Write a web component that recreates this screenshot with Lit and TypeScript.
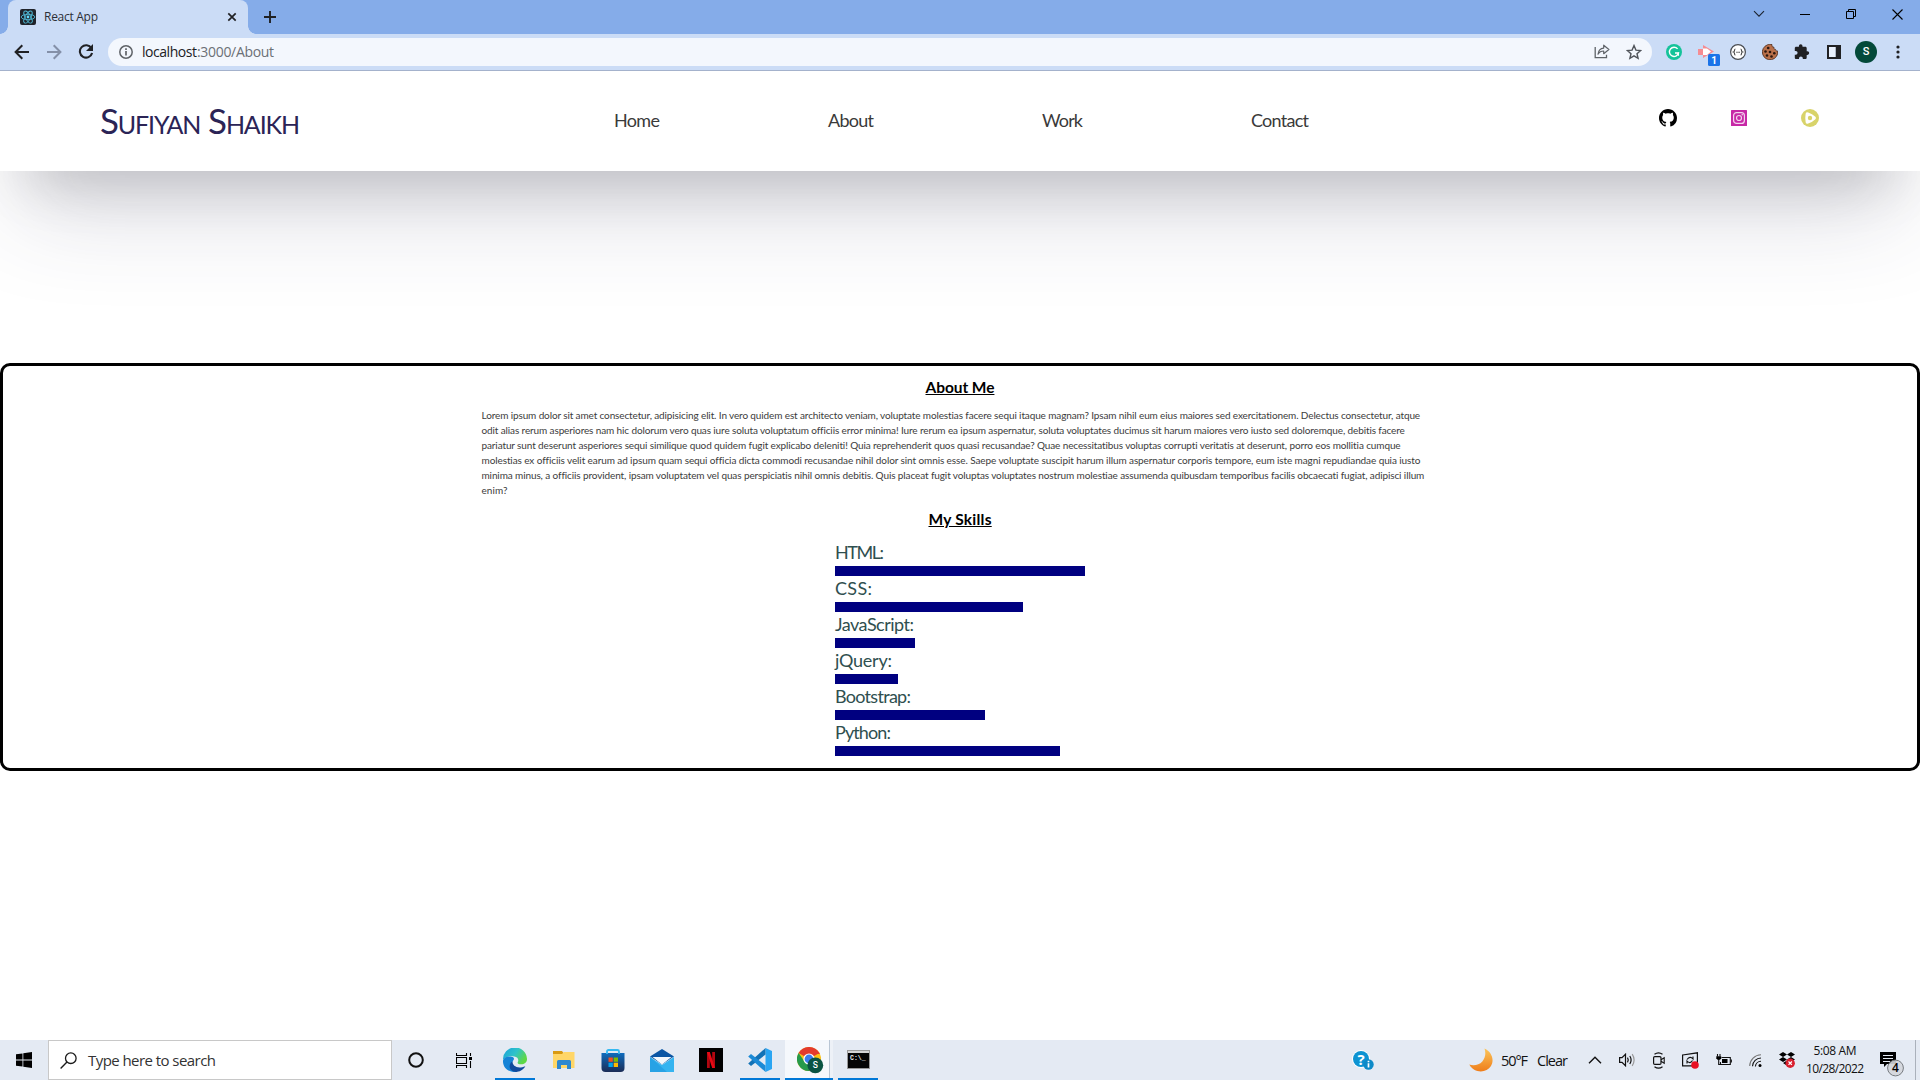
import { LitElement, html, css, svg } from "lit";
import { customElement, property } from "lit/decorators.js";

/** One line of text, tracked so that it occupies exactly `w` pixels. */
@customElement("fit-text")
class FitText extends LitElement {
  static styles = css`
    :host { display: inline-block; white-space: pre; text-decoration: inherit; }
    .t { display: inline-block; text-decoration: inherit; }
  `;
  @property() text = "";
  @property({ type: Number }) w = 0;
  render() { return html`<span class="t">${this.text}</span>`; }
  updated() {
    const el = this.renderRoot.querySelector<HTMLElement>(".t")!;
    el.style.letterSpacing = "normal";
    const n = [...this.text].length;
    const d = (this.w - el.getBoundingClientRect().width) / Math.max(1, n - 1);
    el.style.letterSpacing = `${d}px`;
    el.style.marginRight = `${-d}px`;
  }
}

const fit = (text: string, w: number) => html`<fit-text .text=${text} .w=${w}></fit-text>`;

const NAV: [string, number][] = [["Home", 46], ["About", 46], ["Work", 41], ["Contact", 58]];

const LINES: [string, number][] = [
  ["Lorem ipsum dolor sit amet consectetur, adipisicing elit. In vero quidem est architecto veniam, voluptate molestias facere sequi itaque magnam? Ipsam nihil eum eius maiores sed exercitationem. Delectus consectetur, atque", 939],
  ["odit alias rerum asperiores nam hic dolorum vero quas iure soluta voluptatum officiis error minima! Iure rerum ea ipsum aspernatur, soluta voluptates ducimus sit harum maiores vero iusto sed doloremque, debitis facere", 923],
  ["pariatur sunt deserunt asperiores sequi similique quod quidem fugit explicabo deleniti! Quia reprehenderit quos quasi recusandae? Quae necessitatibus voluptas corrupti veritatis at deserunt, porro eos mollitia cumque", 920],
  ["molestias ex officiis velit earum ad ipsum quam sequi officia dicta commodi recusandae nihil dolor sint omnis esse. Saepe voluptate suscipit harum illum aspernatur corporis tempore, eum iste magni repudiandae quia iusto", 938],
  ["minima minus, a officiis provident, ipsam voluptatem vel quas perspiciatis nihil omnis debitis. Quis placeat fugit voluptas voluptates nostrum molestiae assumenda quibusdam temporibus facilis obcaecati fugiat, adipisci illum", 943],
  ["enim?", 26],
];

const SKILLS: [string, number, number][] = [
  ["HTML:", 49, 250], ["CSS:", 37, 188], ["JavaScript:", 79, 80],
  ["jQuery:", 57, 63], ["Bootstrap:", 76, 150], ["Python:", 56, 225],
];

const ic = (w: number, h: number, body: unknown) =>
  html`<svg class="ic" width=${w} height=${h} viewBox="0 0 ${w} ${h}">${body}</svg>`;

const icon = {
  react: ic(16, 16, svg`<rect width="16" height="16" rx="2" fill="#20232a"/><g fill="none" stroke="#4fb8d4" stroke-width=".9"><ellipse cx="8" cy="8" rx="6.8" ry="2.7"/><ellipse cx="8" cy="8" rx="6.8" ry="2.7" transform="rotate(60 8 8)"/><ellipse cx="8" cy="8" rx="6.8" ry="2.7" transform="rotate(120 8 8)"/></g><circle cx="8" cy="8" r="1.4" fill="#61dafb"/>`),
  tabClose: ic(10, 10, svg`<path d="M1.3 1.3l7.4 7.4M8.7 1.3L1.3 8.7" stroke="#202124" stroke-width="1.7"/>`),
  plus: ic(12, 12, svg`<path d="M6 0v12M0 6h12" stroke="#202124" stroke-width="1.9"/>`),
  back: ic(16, 16, svg`<path d="M15 8H2M8.3 1.3L1.6 8l6.7 6.7" fill="none" stroke="#202124" stroke-width="2"/>`),
  fwd: ic(16, 16, svg`<path d="M1 8h13M7.7 1.3L14.4 8l-6.7 6.7" fill="none" stroke="#8490a8" stroke-width="2"/>`),
  reload: ic(16, 16, svg`<path d="M13.4 4.2A6.2 6.2 0 1 0 14.1 9" fill="none" stroke="#202124" stroke-width="2.1"/><path d="M15 0v7H8z" fill="#202124"/>`),
  info: ic(14, 14, svg`<circle cx="7" cy="7" r="6.2" fill="none" stroke="#5f6368" stroke-width="1.5"/><path d="M7 6v4.6M7 3.2v1.7" stroke="#5f6368" stroke-width="1.7"/>`),
  share: ic(16, 15, svg`<path d="M1.2 3v10.6h11.3v-2.8" fill="none" stroke="#5f6368" stroke-width="1.3"/><path d="M4 10.2C4.4 6.500 6.500 4.400 9.700 4.100V1.200L14.900 5.500 9.700 9.700V7C7 7 5.300 8 4 10.200z" fill="none" stroke="#5f6368" stroke-width="1.2" stroke-linejoin="round"/>`),
  star: ic(16, 16, svg`<path d="M8 1.600l1.900 4.500 4.800.4-3.700 3.200 1.100 4.700L8 11.900l-4.100 2.500L5 9.700 1.300 6.500l4.800-.4z" fill="none" stroke="#50545a" stroke-width="1.400"/>`),
  grammarly: ic(16, 16, svg`<circle cx="8" cy="8" r="8" fill="#15c39a"/><path d="M11.600 4.900A4.600 4.600 0 1 0 12.500 9H9" fill="none" stroke="#fff" stroke-width="1.400"/><path d="M12.400 8.500v3.200" stroke="#fff" stroke-width="1.200"/>`),
  clip: ic(22, 21, svg`<path d="M0 4h5V0l11 6.500-11 6.500v-3H0z" fill="#f58c92"/><path d="M5 3.500h4l4 3-4 3.500H5z" fill="#fff"/><rect x="10" y="9" width="12" height="12" rx="1.500" fill="#1a73e8"/><text x="16" y="18.600" text-anchor="middle" font-family="Roboto" font-weight="700" font-size="10" fill="#fff">1</text>`),
  braces: ic(16, 16, svg`<circle cx="8" cy="8" r="7.400" fill="#fff" stroke="#4a4d52" stroke-width="1.200"/><path d="M5.400 5C4 5 5 7.600 3.600 8 5 8.400 4 11 5.400 11M10.600 5c1.400 0 .4 2.600 1.800 3-1.400.4-.4 3-1.800 3" fill="none" stroke="#444" stroke-width="1.100"/><path d="M6.300 8.300h3.600" stroke="#444" stroke-width="1.100" stroke-dasharray="1 .3"/>`),
  cookie: ic(16, 16, svg`<path d="M5.500.8A7.700 7.700 0 1 0 15.700 7c-1.500.2-2-.5-2.100-1.600-1.500 0-2.100-.9-1.600-2.300C10.500 3.500 9.700 2.400 10 .6 8.500.2 7 .2 5.500.8z" fill="#b9704a" stroke="#4d2b1a" stroke-width=".8"/><g fill="#2b1710"><circle cx="6.200" cy="4" r="1.300"/><circle cx="3.500" cy="7.500" r="1.300"/><circle cx="8" cy="8" r="1.300"/><circle cx="5" cy="11.500" r="1.300"/><circle cx="9.500" cy="12.500" r="1.300"/><circle cx="12.300" cy="9.200" r="1.300"/></g>`),
  puzzle: ic(16, 16, svg`<path d="M13.400 7.300h-.7V4.200c0-.8-.6-1.400-1.400-1.400H8.500V2a1.800 1.800 0 0 0-3.600 0v.8H2.200C1.400 2.800.8 3.400.8 4.200v2.700h.9a1.900 1.900 0 0 1 0 3.800H.8v3c0 .8.6 1.400 1.400 1.400h2.800v-.8a1.900 1.900 0 0 1 3.800 0v.8h2.500c.8 0 1.400-.6 1.400-1.400v-2.800h.7a1.800 1.800 0 0 0 0-3.600z" fill="#202124"/>`),
  panel: ic(14, 14, svg`<path d="M0 0h14v14H0zM2 2v10h6.500V2z" fill="#202124" fill-rule="evenodd"/><rect x="2" y="2" width="6.500" height="10" fill="#e8f0fc"/>`),
  dots: ic(4, 14, svg`<circle cx="2" cy="2" r="1.600" fill="#202124"/><circle cx="2" cy="7" r="1.600" fill="#202124"/><circle cx="2" cy="12" r="1.600" fill="#202124"/>`),
  chev: ic(12, 8, svg`<path d="M1 1.200l5 5 5-5" fill="none" stroke="#1c2430" stroke-width="1.100"/>`),
  min: ic(10, 10, svg`<path d="M0 5.500h10" stroke="#000"/>`),
  max: ic(10, 10, svg`<path d="M.5 2.500h7v7h-7zM2.500 2.500v-2h7v7h-2" fill="none" stroke="#000"/>`),
  close: ic(11, 11, svg`<path d="M.5.5l10 10M10.500.5l-10 10" stroke="#000" stroke-width="1.100"/>`),
  github: html`<svg class="ic" width="18" height="18" viewBox="0 0 16 16"><path d="M8 0C3.580 0 0 3.580 0 8c0 3.540 2.290 6.530 5.470 7.590.4.070.55-.17.55-.38 0-.19-.01-.82-.01-1.490-2.010.37-2.530-.49-2.690-.94-.09-.23-.48-.94-.82-1.130-.28-.15-.68-.52-.01-.53.63-.01 1.080.58 1.230.82.72 1.210 1.870.87 2.330.66.070-.52.28-.87.51-1.070-1.780-.2-3.640-.89-3.640-3.950 0-.87.31-1.590.82-2.150-.08-.2-.36-1.020.08-2.120 0 0 .67-.21 2.200.82.64-.18 1.320-.27 2-.27s1.360.09 2 .27c1.530-1.040 2.200-.82 2.200-.82.44 1.100.16 1.920.08 2.120.51.56.82 1.270.82 2.150 0 3.070-1.870 3.750-3.650 3.950.29.25.54.73.54 1.480 0 1.070-.01 1.930-.01 2.200 0 .21.15.46.55.38A8.010 8.010 0 0 0 16 8c0-4.420-3.580-8-8-8z"/></svg>`,
  insta: ic(16, 16, svg`<rect width="16" height="16" rx=".5" fill="#c729a6"/><g fill="none" stroke="#f4d4ee" stroke-width="1.200"><rect x="2.600" y="2.600" width="10.800" height="10.800" rx="3"/><circle cx="8" cy="8" r="2.500"/></g><circle cx="11.200" cy="4.800" r=".8" fill="#f4d4ee"/>`),
  play: ic(18, 18, svg`<circle cx="9" cy="9" r="9" fill="#d8d36a"/><path d="M4.600 5.200q0-2.600 2.600-1.700 4 1.200 7.200 4.300 1.200 1.200 0 2.400-3.200 3.100-7.200 4.300-2.600.9-2.600-1.700-.6-3.800 0-7.600z" fill="#fff"/><circle cx="9" cy="9" r="2.200" fill="#d8d36a"/>`),
  win: ic(16, 16, svg`<path d="M0 2.300L6.500 1.400v6.200H0zM7.300 1.300L16 0v7.600H7.300zM0 8.400h6.500v6.200L0 13.700zM7.300 8.400H16V16l-8.700-1.300z" fill="#000"/>`),
  search: ic(17, 17, svg`<circle cx="10.800" cy="6.200" r="5.300" fill="none" stroke="#1a1a1a" stroke-width="1.300"/><path d="M7 10L.6 16.400" stroke="#1a1a1a" stroke-width="1.400"/>`),
  cortana: ic(16, 16, svg`<circle cx="8" cy="8" r="6.800" fill="none" stroke="#111" stroke-width="2"/>`),
  task: ic(16, 15, svg`<path d="M.5 0v2.500h10V0M.5 15v-2.500h10V15M.5 4.500h10v6H.5zM14.500 0v3M14.500 8v7" fill="none" stroke="#000" stroke-width="1.100"/><rect x="13" y="4" width="3" height="3"/>`),
  edge: html`<svg class="ic" width="24" height="24" viewBox="0 0 24 24"><defs><linearGradient id="e1" x1="0" y1="0" x2="1" y2=".5"><stop offset="0" stop-color="#1aa0dc"/><stop offset=".55" stop-color="#2fc3c9"/><stop offset="1" stop-color="#5fd845"/></linearGradient></defs><path d="M0 12A12 12 0 0 1 24 10.800c.2 3.500-2.300 5.500-5.800 5.500-2.700 0-4-1-3.400-2.200 1.200-1.800.3-5.400-3.700-5.600C6.500 7.500 2 9 0 12z" fill="url(#e1)"/><path d="M0 12.500C1 8.800 5 7.800 8.500 8.700c3 .7 3 2.300 1.500 4-2.500 3.500-.5 9 4.500 11C6 25.500-.5 20 0 12.500z" fill="#1583d6"/><path d="M9.500 13.200c-.5 4.200 4.500 8.300 12.800 5C19 24 12.500 25 9 22.800 5.500 20.400 6 15.500 9.500 13.200z" fill="#114a9c"/></svg>`,
  folder: ic(22, 18, svg`<path d="M0 0h9l1.500 2H21v4H0z" fill="#d99a12"/><path d="M0 3h9l2-2h10.500v16H0z" fill="#ffd667"/><path d="M4 18v-7.500q0-1.500 1.500-1.500h11q1.500 0 1.500 1.500V18h-4v-4H8v4z" fill="#2f88cf"/>`),
  store: html`<svg class="ic" width="24" height="24" viewBox="0 0 24 24"><defs><linearGradient id="s1" x1="0" y1="0" x2="0" y2="1"><stop offset="0" stop-color="#0f6cbd"/><stop offset="1" stop-color="#1b2c56"/></linearGradient></defs><path d="M.5 5h23v15q0 4-4 4h-15q-4 0-4-4z" fill="url(#s1)"/><path d="M6 6V3.500q0-1.500 1.500-1.500h9q1.500 0 1.500 1.500V6" fill="none" stroke="#35b9f1" stroke-width="1.800"/><rect x="7.500" y="9.500" width="4.300" height="4.300" fill="#f25022"/><rect x="12.700" y="9.500" width="4.300" height="4.300" fill="#7fba00"/><rect x="7.500" y="14.700" width="4.300" height="4.300" fill="#00a4ef"/><rect x="12.700" y="14.700" width="4.300" height="4.300" fill="#ffb900"/></svg>`,
  mail: ic(24, 23, svg`<path d="M0 7.500L12 0l12 7.500-12 8z" fill="#0b56a4"/><path d="M2.500 8h19L12 15.500z" fill="#f4f8fc"/><path d="M0 8l12 8 12-8v15H0z" fill="#35b4f0"/><path d="M0 8l17 15H0z" fill="#1b93dc" opacity=".55"/>`),
  netflix: ic(24, 24, svg`<rect width="24" height="24"/><path d="M8 4h2.800v16H8zM13.200 4H16v16h-2.800z" fill="#b1060f"/><path d="M8 4h2.800L16 20h-2.800z" fill="#e50914"/>`),
  code: ic(24, 24, svg`<path d="M17.500 0L24 3v18l-6.500 3z" fill="#2aa5f2"/><path d="M17.500 0v6.500L3 18l-2.800-2.500L17.500 0z" fill="#1272b6"/><path d="M17.500 24v-6.500L3 6 .2 8.500 17.500 24z" fill="#1b8ad6"/>`),
  chrome: ic(27, 27, svg`<circle cx="12" cy="12" r="12" fill="#fbc116"/><path d="M12 12L1.600 6A12 12 0 0 1 22.400 6z" fill="#e33b2e"/><path d="M1.600 6A12 12 0 0 0 12 24l5-8.500-9.500-1z" fill="#269a4b"/><path d="M12 6.500h10.600" stroke="#e33b2e" stroke-width="1"/><circle cx="12" cy="12" r="5.600" fill="#fff"/><circle cx="12" cy="12" r="4.400" fill="#3b7ded"/><circle cx="18.300" cy="18.300" r="7.900" fill="#0a5443"/><text x="18.300" y="21.300" text-anchor="middle" font-family="Roboto" font-weight="500" font-size="8.500" fill="#fff">S</text>`),
  cmd: ic(23, 20, svg`<rect x=".5" y=".5" width="22" height="18" fill="#050505" stroke="#999"/><rect x="1" y="1" width="21" height="2" fill="#d5d5d5"/><text x="3" y="10" font-family="Liberation Mono" font-weight="700" font-size="6.500" fill="#eee">C:\\_</text>`),
  help: ic(22, 21, svg`<circle cx="9" cy="9" r="9" fill="#fff"/><circle cx="9" cy="9" r="8" fill="#0d93d2"/><text x="9" y="14.500" text-anchor="middle" font-family="Open Sans" font-weight="700" font-size="15" fill="#fff">?</text><circle cx="16.500" cy="14.500" r="5.200" fill="#0d8ac8"/><path d="M16.500 13.300v4.200M16.500 10.700v1.600" stroke="#fff" stroke-width="1.700"/>`),
  moon: html`<svg class="ic" width="24" height="24" viewBox="0 0 24 24"><defs><linearGradient id="m1" x1="0" y1="0" x2="0" y2="1"><stop offset="0" stop-color="#fbc55a"/><stop offset="1" stop-color="#ef7d1a"/></linearGradient></defs><path d="M15.500.5C23 4 25.500 12 22 18 17.500 25.500 5 25.500.3 16.500c4 1.500 9.700.8 13-3 3.200-4 3.700-8.500 2.200-13z" fill="url(#m1)"/></svg>`,
  up: ic(14, 8, svg`<path d="M1 7.200l6-6 6 6" fill="none" stroke="#111" stroke-width="1.400"/>`),
  vol: ic(17, 14, svg`<path d="M.6 4.600h2.400L6.500 1.200v11.600L3 9.400H.6z" fill="none" stroke="#111" stroke-width="1.200"/><path d="M8.500 4.700q1.500 2.300 0 4.600M10.800 3q2.600 4 0 8" fill="none" stroke="#111" stroke-width="1.200"/><path d="M13.200 1.200q3.800 5.800 0 11.600" fill="none" stroke="#999" stroke-width="1.200"/>`),
  cam: ic(12, 17, svg`<path d="M1.500 2.300q4-2.800 8 0M1.500 14.700q4 2.800 8 0" fill="none" stroke="#111" stroke-width="1.200"/><rect x=".6" y="4.600" width="7.400" height="7.800" rx="1.200" fill="none" stroke="#111" stroke-width="1.200"/><path d="M8 7.700l3.200-2v5.600L8 9.300" fill="none" stroke="#111" stroke-width="1.100"/>`),
  sync: ic(17, 17, svg`<path d="M.6 3L15.400.8v13H.6z" fill="none" stroke="#111" stroke-width="1.200"/><path d="M5 7.500q3-4 6-.5V4.500M10.500 8.500q-2.500 4-5.500.5v2.500" fill="none" stroke="#111" stroke-width="1.100"/><circle cx="13" cy="13" r="3.800" fill="#e81123"/>`),
  batt: ic(16, 12, svg`<path d="M5.500 3.500h8.800v7H4.500V8" fill="none" stroke="#111" stroke-width="1.100"/><path d="M15.300 5.500v3" stroke="#111" stroke-width="1.200"/><rect x="6" y="5" width="5.500" height="4"/><path d="M1.500 0v2.500M4 0v2.500M2.700 5v5.500h2" stroke="#111" stroke-width="1.100" fill="none"/><path d="M.3 2.300h4.900v2L4 5.700H1.500L.3 4.300z"/>`),
  wifi: ic(13, 13, svg`<g fill="none" stroke="#111" stroke-width="1.100"><path d="M.7 12A11.500 11.500 0 0 1 12 .8" stroke="#777"/><path d="M3.500 12.300A8.700 8.700 0 0 1 12 4"/><path d="M6.400 12.500A5.600 5.600 0 0 1 12 7.300"/></g><circle cx="11" cy="11.500" r="1.500"/>`),
  dropbox: ic(16, 16, svg`<path d="M4 0l4 2.500L4 5 0 2.500zM12 0l4 2.500L12 5 8 2.500zM4 5l4 2.500L4 10 0 7.500zM12 5l4 2.500L12 10 8 7.500zM4 11l4-2.500 2 1.500-3 3z"/><circle cx="11.200" cy="11.200" r="4.700" fill="#d9202f"/><path d="M9.500 9.500l3.400 3.400M12.900 9.500l-3.400 3.400" stroke="#fff" stroke-width="1.200"/>`),
  notif: ic(24, 25, svg`<path d="M0 0h16v12H7l-3 3v-3H0z"/><path d="M3 3.500h10M3 6.500h10M3 9.500h7" stroke="#e4eaf3" stroke-width="1.100"/><circle cx="15.500" cy="16" r="7.900" fill="#d3d6db" fill-opacity=".9" stroke="#777b80" stroke-width="1"/><text x="15.500" y="20.200" text-anchor="middle" font-family="Open Sans" font-weight="600" font-size="12">4</text>`),
};

@customElement("app-root")
class AppRoot extends LitElement {
  static styles = css`
    :host { display: flex; flex-direction: column; width: 1920px; height: 1080px; background: #fff; overflow: hidden; font-family: "Open Sans", "Noto Sans", sans-serif; }
    * { box-sizing: border-box; }
    .ic { display: block; flex: none; }
    .tabs { height: 34px; flex: none; background: #85ace9; display: flex; align-items: flex-start; padding-left: 8px; }
    .tab { position: relative; width: 240px; height: 34px; border-radius: 8px 8px 0 0; background: #cbdcf6; display: flex; align-items: center; padding: 0 11px 0 12px; font-size: 12px; color: #2c3037; }
    .tab::before, .tab::after { content: ""; position: absolute; bottom: 0; width: 8px; height: 8px; }
    .tab::before { left: -8px; background: radial-gradient(circle at 0 0, #85ace9 7.500px, #cbdcf6 8px); }
    .tab::after { right: -8px; background: radial-gradient(circle at 100% 0, #85ace9 7.500px, #cbdcf6 8px); }
    .title { flex: 1; margin-left: 8px; padding-bottom: 1px; }
    .plus { margin: 11px 0 0 16px; }
    .wctl { margin-left: auto; display: flex; height: 28px; align-items: center; }
    .wctl > span { width: 46px; display: flex; justify-content: center; }
    .bar { height: 37px; flex: none; background: #cbdcf6; border-bottom: 1px solid #a4b2cc; display: flex; align-items: center; padding: 0 6px 0 14px; }
    .navi { display: flex; gap: 16px; width: 94px; flex: none; }
    .omni { width: 1544px; flex: none; height: 28px; border-radius: 14px; background: #f3f7fd; display: flex; align-items: center; padding: 0 10px 0 11px; font-size: 14px; color: #6b7076; }
    .omni .url { flex: 1; margin-left: 9px; padding-bottom: 1px; }
    .omni b { font-weight: 400; color: #202124; }
    .omni .pair { display: flex; gap: 16px; }
    .ext { display: flex; align-items: center; flex: none; margin-left: 6px; }
    .ext > span { width: 32px; display: flex; justify-content: center; }
    .ext .over { padding: 7px 0 0 6px; }
    .avatar { width: 22px; height: 22px; border-radius: 50%; background: #03493a; color: #fff; font: 500 11px/22px Roboto, sans-serif; text-align: center; }
    .page { flex: 1; display: flex; flex-direction: column; font-family: Lato, "Open Sans", sans-serif; min-height: 0; overflow: hidden; }
    .head { height: 100px; flex: none; display: flex; align-items: center; background: #fff; box-shadow: rgba(50,50,93,.25) 0 50px 100px -20px, rgba(0,0,0,.3) 0 30px 60px -30px; }
    .logo { font-size: 35px; font-variant: small-caps; color: #2b2456; width: 513px; flex: none; padding: 0 0 3px 100px; font-weight: 400; line-height: 42px; }
    .links { display: flex; gap: 168px; width: 945px; flex: none; padding: 0 0 2px 101px; font-size: 18px; color: #3a3a3a; }
    .social { display: flex; align-items: center; gap: 54px; margin-left: 201px; padding-bottom: 6px; }
    .box { margin-top: 192px; height: 408px; flex: none; border: 3px solid #000; border-radius: 10px; display: flex; flex-direction: column; align-items: center; background: #fff; }
    .h { font-size: 15.500px; font-weight: 700; line-height: 20px; height: 20px; text-decoration: underline; text-underline-offset: 1px; color: #000; }
    .h1 { margin-top: 11px; }
    .h2 { margin-top: 11px; }
    .para { width: 957px; margin-top: 11px; font-size: 10px; line-height: 15px; color: #3c3c3c; display: flex; flex-direction: column; align-items: flex-start; }
    .skills { width: 250px; margin-top: 11px; display: flex; flex-direction: column; }
    .lab { height: 26px; line-height: 25px; font-size: 18px; color: #2f4f4f; }
    .fill { height: 10px; background: #000080; }
    .task { height: 40px; flex: none; background: #e4eaf3; display: flex; }
    .start { width: 48px; display: flex; align-items: center; justify-content: center; }
    .find { width: 344px; border: 1px solid #c8c8c8; background: #fff; display: flex; align-items: center; gap: 11px; padding-left: 11px; font-size: 15px; color: #333; }
    .sys { width: 48px; display: flex; align-items: center; justify-content: center; }
    .apps { display: flex; margin-left: 7px; gap: 9px; }
    .app { width: 40px; display: flex; align-items: center; justify-content: center; border-bottom: 2px solid transparent; padding-top: 2px; }
    .run { border-bottom-color: #0078d7; }
    .active { width: 48px; margin: 0 -4px 0 -4px; padding-left: 3px; background: linear-gradient(90deg, #f5f8fc 44px, #b9c6d4 44px, #b9c6d4 45px, #edf1f7 45px); }
    .tray { margin-left: auto; display: flex; align-items: center; color: #111; font-size: 14.500px; }
    .help { margin-right: 95px; }
    .w { margin-left: 8px; }
    .cond { margin-left: 9px; }
    .ti { display: flex; align-items: center; gap: 17px; margin-left: 20px; }
    .clock { margin-left: 10px; width: 60px; display: flex; flex-direction: column; align-items: center; font-size: 12px; line-height: 18px; }
    .notif { margin-left: 15px; padding-top: 8px; width: 35px; }
    .peek { width: 5px; height: 40px; border-left: 1px solid #aab1bb; }
  `;
  render() {
    return html`
      <div class="tabs">
        <div class="tab">${icon.react}<span class="title">${fit("React App", 54)}</span>${icon.tabClose}</div>
        <span class="plus">${icon.plus}</span>
        <div class="wctl"><span>${icon.chev}</span><span>${icon.min}</span><span>${icon.max}</span><span>${icon.close}</span></div>
      </div>
      <div class="bar">
        <div class="navi">${icon.back}${icon.fwd}${icon.reload}</div>
        <div class="omni">${icon.info}<span class="url"><b>${fit("localhost", 55)}</b>${fit(":3000/About", 77)}</span><span class="pair">${icon.share}${icon.star}</span></div>
        <div class="ext"><span>${icon.grammarly}</span><span class="over">${icon.clip}</span><span>${icon.braces}</span><span>${icon.cookie}</span><span>${icon.puzzle}</span><span>${icon.panel}</span><span><span class="avatar">S</span></span><span>${icon.dots}</span></div>
      </div>
      <div class="page">
        <div class="head">
          <div class="logo">${fit("Sufiyan Shaikh", 200)}</div>
          <div class="links">${NAV.map(([t, w]) => fit(t, w))}</div>
          <div class="social">${icon.github}${icon.insta}${icon.play}</div>
        </div>
        <div class="box">
          <div class="h h1">${fit("About Me", 69)}</div>
          <div class="para">${LINES.map(([t, w]) => fit(t, w))}</div>
          <div class="h h2">${fit("My Skills", 63)}</div>
          <div class="skills">${SKILLS.map(([t, w, b]) => html`<div class="lab">${fit(t, w)}</div><div class="fill" style="width:${b}px"></div>`)}</div>
        </div>
      </div>
      <div class="task">
        <div class="start">${icon.win}</div>
        <div class="find">${icon.search}${fit("Type here to search", 128)}</div>
        <div class="sys">${icon.cortana}</div><div class="sys">${icon.task}</div>
        <div class="apps">
          <div class="app run">${icon.edge}</div><div class="app">${icon.folder}</div><div class="app">${icon.store}</div><div class="app">${icon.mail}</div><div class="app">${icon.netflix}</div><div class="app run">${icon.code}</div><div class="app run active">${icon.chrome}</div><div class="app run">${icon.cmd}</div>
        </div>
        <div class="tray">
          <span class="help">${icon.help}</span>${icon.moon}
          <span class="w">${fit("50°F", 27)}</span><span class="cond">${fit("Clear", 31)}</span>
          <span class="ti">${icon.up}${icon.vol}${icon.cam}${icon.sync}${icon.batt}${icon.wifi}${icon.dropbox}</span>
          <span class="clock">${fit("5:08 AM", 43)}${fit("10/28/2022", 58)}</span>
          <span class="notif">${icon.notif}</span><span class="peek"></span>
        </div>
      </div>`;
  }
}
